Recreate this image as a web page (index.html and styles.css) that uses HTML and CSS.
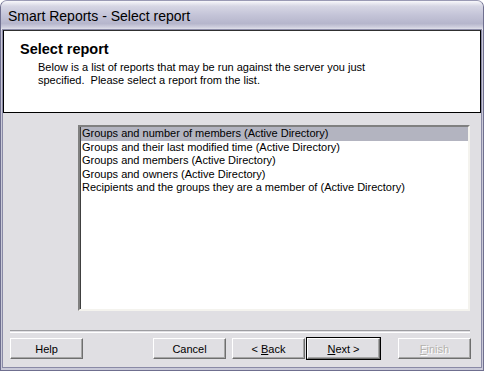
FILE: index.html
```html
<!DOCTYPE html>
<html lang="en">
<head>
  <meta charset="UTF-8">
  <title>Smart Reports - Select report</title>
  <link rel="stylesheet" href="styles.css">
</head>
<body>

  <div class="window">
    <div class="titlebar">Smart Reports - Select report</div>

    <div class="client">
      <!-- Wizard header -->
      <div class="header">
        <div class="header-title">Select report</div>
        <div class="header-text">
          Below is a list of reports that may be run against the server you just<br>
          specified.&nbsp; Please select a report from the list.
        </div>
      </div>

      <div class="body">
        <div class="listbox">
          <div class="item selected">Groups and number of members (Active Directory)</div>
          <div class="item">Groups and their last modified time (Active Directory)</div>
          <div class="item">Groups and members (Active Directory)</div>
          <div class="item">Groups and owners (Active Directory)</div>
          <div class="item">Recipients and the groups they are a member of (Active Directory)</div>
        </div>

        <div class="separator"></div>

        <div class="buttons">
          <button class="btn btn-help">Help</button>
          <button class="btn btn-cancel">Cancel</button>
          <button class="btn btn-back">&lt; <u>B</u>ack</button>
          <button class="btn btn-next default"><u>N</u>ext &gt;</button>
          <button class="btn btn-finish" disabled><u>F</u>inish</button>
        </div>
      </div>
    </div>
  </div>

</body>
</html>
```

FILE: styles.css
```css
body {
  margin: 0;
  padding: 0;
  background-color: #ffffff;
  font-family: "Liberation Sans", Arial, sans-serif;
  font-size: 11px;
  color: #000000;
}
.window {
  width: 484px;
  height: 371px;
  box-sizing: border-box;
  display: flex;
  flex-direction: column;
  background-color: #c9c9d8;
  border: 1px solid #6f6f8f;
  border-top-color: #9a9ab4;
  border-radius: 7px 7px 0 0;
  overflow: hidden;
}
.titlebar {
  height: 29px;
  flex-shrink: 0;
  padding-left: 7px;
  font-size: 14px;
  line-height: 30px;
  color: #000000;
  background: linear-gradient(#f8f8fb 0%, #d6d6e4 18%, #c3c3d7 50%, #b6b6cc 78%, #d2d2e0 92%, #eeeef4 100%);
}
.client {
  flex: 1;
  display: flex;
  flex-direction: column;
  margin: 0 2px 3px 2px;
  background-color: #e0dfe3;
  box-shadow: 0 0 0 1px #8a8aa6;
}
.header {
  height: 81px;
  flex-shrink: 0;
  background-color: #ffffff;
  border: 1px solid #000000;
  border-top-color: #303030;
}
.header-title {
  margin: 10px 0 0 16px;
  font-size: 14.5px;
  font-weight: bold;
}
.header-text {
  margin: 4px 0 0 34px;
  line-height: 13px;
}
.body {
  flex: 1;
  display: flex;
  flex-direction: column;
  padding: 12px 0 0 0;
}
.listbox {
  width: 387px;
  height: 182px;
  margin-left: 75px;
  background-color: #ffffff;
  border: 2px solid;
  border-color: #808080 #f4f3ee #f4f3ee #808080;
  box-shadow: inset 1px 1px 0 #404040;
  padding: 0 0 0 1px;
}
.item {
  height: 13.5px;
  line-height: 13px;
  padding-left: 1px;
  white-space: nowrap;
}
.item.selected {
  background-color: #b3b4c0;
}
.separator {
  margin: 19px 0 0 7px;
  width: 460px;
  height: 1px;
  border-top: 1px solid #9d9da1;
  border-bottom: 1px solid #ffffff;
}
.buttons {
  display: flex;
  margin: 5px 0 0 7px;
}
.btn {
  width: 73px;
  height: 21px;
  padding: 0;
  font-family: "Liberation Sans", Arial, sans-serif;
  font-size: 11px;
  color: #000000;
  background-color: #e0dfe3;
  border: 1px solid;
  border-color: #ffffff #6e6e6e #6e6e6e #ffffff;
  box-shadow: inset -1px -1px 0 #a6a6a6;
}
.btn.default {
  outline: 1px solid #000000;
  outline-offset: 0;
}
.btn:disabled {
  color: #b4b2ad;
  text-shadow: 1px 1px 0 #ffffff;
}
.btn-cancel { margin-left: 70px; }
.btn-back { margin-left: 6px; }
.btn-next { margin-left: 2px; }
.btn-finish { margin-left: 18px; }
```
